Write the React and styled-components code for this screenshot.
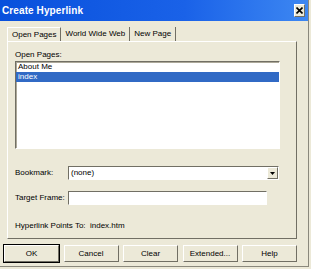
import React, { useState } from "react";
import styled, { createGlobalStyle } from "styled-components";

const GlobalStyle = createGlobalStyle`
    html, body {
        margin: 0;
        padding: 0;
        background: #ECE9D8;
    }
    body {
        font-family: "Liberation Sans", Arial, sans-serif;
        font-size: 8px;
        color: #000;
    }
    * {
        box-sizing: border-box;
    }
`;

// Окно
const Window = styled.div`
    width: 309px;
    height: 267px;
    background: #ECE9D8;
    border-right: 1px solid #8a887c;
    border-bottom: 1px solid #8a887c;
    display: flex;
    flex-direction: column;
`;

const TitleBar = styled.div`
    height: 21px;
    background: linear-gradient(to right, #0850dc 0%, #1a62e8 60%, #3d87f2 100%);
    display: flex;
    align-items: center;
    justify-content: space-between;
    padding: 0 3px 0 2px;
`;

const Title = styled.span`
    color: #fff;
    font-weight: bold;
    font-size: 10px;
    letter-spacing: 0.1px;
`;

const CloseButton = styled.button`
    width: 11px;
    height: 13px;
    padding: 0;
    margin: 0;
    background: #ECE9D8;
    border: 1px solid;
    border-color: #fff #716f64 #716f64 #fff;
    display: flex;
    align-items: center;
    justify-content: center;
`;

const Body = styled.div`
    padding: 6px 11px 0 7px;
    flex: 1;
    display: flex;
    flex-direction: column;
`;

const TabStrip = styled.div`
    display: flex;
    height: 14px;
`;

const Tab = styled.div`
    height: 14px;
    line-height: 13px;
    padding: 0 ${(p) => p.$pad}px;
    border-right: 1px solid #716f64;
    border-left: ${(p) => (p.$active ? "1px solid #fff" : "none")};
    border-top: ${(p) => (p.$active ? "1px solid #fff" : "none")};
    white-space: nowrap;
`;

const Panel = styled.div`
    height: 198px;
    border: 1px solid;
    border-color: #fff #716f64 #716f64 #fff;
    padding: 8px 0 0 7px;
    display: flex;
    flex-direction: column;
`;

const Label = styled.div`
    line-height: 10px;
    height: 10px;
    white-space: nowrap;
`;

const ListBox = styled.div`
    width: 265px;
    height: 88px;
    background: #fff;
    border: 1px solid;
    border-color: #716f64 #fff #fff #716f64;
    box-shadow: inset 1px 1px 0 #aca899;
    margin-top: 1px;
`;

const ListItem = styled.div`
    height: 10px;
    line-height: 10px;
    padding-left: 2px;
    background: ${(p) => (p.$selected ? "#316ac5" : "transparent")};
    color: ${(p) => (p.$selected ? "#fff" : "#000")};
`;

const FormGrid = styled.div`
    display: grid;
    grid-template-columns: 53px auto;
    row-gap: 11px;
    align-items: center;
    margin-top: 17px;
`;

const Combo = styled.div`
    width: 211px;
    height: 14px;
    background: #fff;
    border: 1px solid;
    border-color: #716f64 #fff #fff #716f64;
    display: flex;
    align-items: stretch;
    justify-content: space-between;
    padding-left: 2px;
    line-height: 12px;
`;

const ArrowButton = styled.div`
    width: 11px;
    background: #ECE9D8;
    border: 1px solid;
    border-color: #fff #716f64 #716f64 #fff;
    display: flex;
    align-items: center;
    justify-content: center;
`;

const TextInput = styled.input`
    width: 199px;
    height: 14px;
    background: #fff;
    border: 1px solid;
    border-color: #716f64 #fff #fff #716f64;
    padding: 0 2px;
    font: inherit;
    outline: none;
`;

const PointsTo = styled.div`
    margin-top: 16px;
    line-height: 10px;
    white-space: pre;
`;

const ButtonRow = styled.div`
    display: flex;
    gap: 4.5px;
    margin: 6px 0 0 -3px;
`;

const Button = styled.button`
    width: 57px;
    height: 17px;
    padding: 0;
    font: inherit;
    background: #ECE9D8;
    color: #000;
    border: 1px solid;
    border-color: #fff #716f64 #716f64 #fff;
    box-shadow: ${(p) => (p.$default ? "0 0 0 1px #000" : "none")};
`;

const App = () => {
    const [selected, setSelected] = useState("index");
    const [frame, setFrame] = useState("");

    return (
        <>
            <GlobalStyle />
            <Window>
                <TitleBar>
                    <Title>Create Hyperlink</Title>
                    <CloseButton>
                        <svg width="7" height="7" viewBox="0 0 7 7">
                            <path d="M0.5 0.5 L6.5 6.5 M6.5 0.5 L0.5 6.5" stroke="#000" strokeWidth="1.6" />
                        </svg>
                    </CloseButton>
                </TitleBar>
                <Body>
                    <TabStrip>
                        <Tab $active $pad={4}>Open Pages</Tab>
                        <Tab $pad={4}>World Wide Web</Tab>
                        <Tab $pad={4}>New Page</Tab>
                    </TabStrip>
                    <Panel>
                        <Label>Open Pages:</Label>
                        <ListBox>
                            {["About Me", "index"].map((name) => (
                                <ListItem
                                    key={name}
                                    $selected={selected === name}
                                    onClick={() => setSelected(name)}
                                >
                                    {name}
                                </ListItem>
                            ))}
                        </ListBox>
                        <FormGrid>
                            <Label>Bookmark:</Label>
                            <Combo>
                                <span>(none)</span>
                                <ArrowButton>
                                    <svg width="5" height="3" viewBox="0 0 5 3">
                                        <path d="M0 0 H5 L2.5 3 Z" fill="#000" />
                                    </svg>
                                </ArrowButton>
                            </Combo>
                            <Label>Target Frame:</Label>
                            <TextInput value={frame} onChange={(e) => setFrame(e.target.value)} />
                        </FormGrid>
                        <PointsTo>Hyperlink Points To:  index.htm</PointsTo>
                    </Panel>
                    <ButtonRow>
                        <Button $default>OK</Button>
                        <Button>Cancel</Button>
                        <Button>Clear</Button>
                        <Button>Extended...</Button>
                        <Button>Help</Button>
                    </ButtonRow>
                </Body>
            </Window>
        </>
    );
};

export default App;
